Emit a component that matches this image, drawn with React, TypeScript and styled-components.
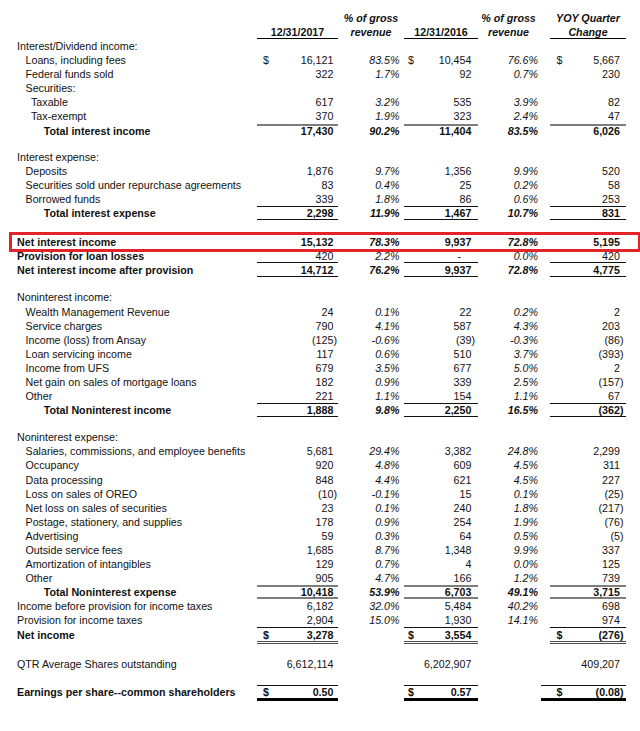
import React from 'react';
import styled, { createGlobalStyle } from 'styled-components';

const GlobalStyle = createGlobalStyle`
  html, body { margin: 0; padding: 0; background: #fff; }
  body {
    font-family: "Liberation Sans", Arial, Helvetica, sans-serif;
    color: #111;
  }
`;

const COLS = '257px 81px 66px 74px 72px 76px';

type Line = 'thin' | 'gray' | 'double' | 'thick' | undefined;

const GRAY = '#7d7d7d';
const DARKGRAY = '#4f4f4f';

const lineShadow = (top: Line, bottom: Line) => {
  const s: string[] = [];
  if (top === 'thin') s.push('inset 0 1px 0 #111');
  if (top === 'gray') s.push(`inset 0 2px 0 ${GRAY}`);
  if (bottom === 'thin') s.push('inset 0 -1px 0 #111');
  if (bottom === 'gray') s.push(`inset 0 -2px 0 ${GRAY}`);
  if (bottom === 'thick') s.push('inset 0 -3px 0 #000');
  if (bottom === 'double')
    s.push(`inset 0 -1px 0 ${DARKGRAY}`, 'inset 0 -2px 0 #fff', `inset 0 -3px 0 ${DARKGRAY}`);
  return s.length ? s.join(', ') : 'none';
};

/* rows closed by a heavy rule are a little taller so the rule sits below the figures */
const extraHeight = (l: Line) => (l === 'double' || l === 'thick' ? 2 : 0);

const Page = styled.div`
  width: 640px;
  padding: 11px 0 24px;
  font-size: 10.7px;
`;

const HeaderRow = styled.div`
  display: grid;
  grid-template-columns: ${COLS};
  height: 28px;
  align-items: end;
  line-height: 14px;
  font-weight: bold;
`;

const DateHead = styled.div`
  text-align: center;
  height: 14px;
  box-shadow: inset 0 -1px 0 #000;
`;

const PctHead = styled.div<{ $pr: number }>`
  text-align: center;
  font-style: italic;
  padding-right: ${(p) => p.$pr}px;
`;

const YoyHead = styled.div`
  text-align: center;
  font-style: italic;
  box-shadow: inset 0 -1px 0 #000;
`;

const Row = styled.div<{ $extra: number }>`
  position: relative;
  display: grid;
  grid-template-columns: ${COLS};
  height: ${(p) => 14.1 + p.$extra}px;
  line-height: 14.1px;
`;

const Gap = styled.div<{ $h: number }>`
  height: ${(p) => p.$h}px;
`;

const Label = styled.div<{ $indent: number; $bold?: boolean }>`
  padding-left: ${(p) => p.$indent}px;
  font-weight: ${(p) => (p.$bold ? 'bold' : 'normal')};
  white-space: nowrap;
`;

const Amount = styled.div<{
  $pl: number;
  $pr: number;
  $top?: Line;
  $bottom?: Line;
  $bold?: boolean;
  $extend?: number;
}>`
  display: flex;
  justify-content: space-between;
  align-items: flex-start;
  white-space: nowrap;
  margin-left: ${(p) => -(p.$extend || 0)}px;
  padding: 0 ${(p) => p.$pr}px 0 ${(p) => p.$pl + (p.$extend || 0)}px;
  box-shadow: ${(p) => lineShadow(p.$top, p.$bottom)};
  font-weight: ${(p) => (p.$bold ? 'bold' : 'normal')};
`;

const Cur = styled.span``;

const Num = styled.span<{ $neg?: boolean; $dash?: boolean }>`
  margin-left: auto;
  padding-right: ${(p) => (p.$neg ? '0' : p.$dash ? 'calc(0.333em + 10.5px)' : '0.333em')};
`;

const Pct = styled.div<{ $pr: number; $bold?: boolean }>`
  text-align: right;
  white-space: nowrap;
  font-style: italic;
  padding-right: ${(p) => p.$pr}px;
  font-weight: ${(p) => (p.$bold ? 'bold' : 'normal')};
`;

const Highlight = styled.div`
  position: absolute;
  left: 9px;
  right: -1px;
  top: -3px;
  bottom: -3px;
  border: 3px solid #e4222a;
  pointer-events: none;
  z-index: 1;
`;

type RowDef =
  | {
      kind: 'row';
      label: string;
      indent: number;
      lb?: boolean;
      vb?: boolean;
      v?: [string, string, string, string, string];
      cur?: boolean;
      top?: Line;
      bottom?: Line;
      highlight?: boolean;
      extend?: boolean;
    }
  | { kind: 'gap'; h: number };

const L0 = 17;
const L1 = 25.5;
const L2 = 31;
const LT = 43.7;

const r = (
  label: string,
  indent: number,
  v?: [string, string, string, string, string],
  extra: Partial<Extract<RowDef, { kind: 'row' }>> = {}
): RowDef => ({ kind: 'row', label, indent, v, ...extra });
const gap = (h: number): RowDef => ({ kind: 'gap', h });

const rows: RowDef[] = [
  r('Interest/Dividend income:', L0),
  r('Loans, including fees', L1, ['16,121', '83.5%', '10,454', '76.6%', '5,667'], { cur: true }),
  r('Federal funds sold', L1, ['322', '1.7%', '92', '0.7%', '230']),
  r('Securities:', L1),
  r('Taxable', L2, ['617', '3.2%', '535', '3.9%', '82']),
  r('Tax-exempt', L2, ['370', '1.9%', '323', '2.4%', '47']),
  r('Total interest income', LT, ['17,430', '90.2%', '11,404', '83.5%', '6,026'], {
    lb: true,
    vb: true,
    top: 'gray',
  }),
  gap(12),
  r('Interest expense:', L0),
  r('Deposits', L1, ['1,876', '9.7%', '1,356', '9.9%', '520']),
  r('Securities sold under repurchase agreements', L1, ['83', '0.4%', '25', '0.2%', '58']),
  r('Borrowed funds', L1, ['339', '1.8%', '86', '0.6%', '253']),
  r('Total interest expense', LT, ['2,298', '11.9%', '1,467', '10.7%', '831'], {
    lb: true,
    vb: true,
    top: 'thin',
    bottom: 'thin',
  }),
  gap(15),
  r('Net interest income', L0, ['15,132', '78.3%', '9,937', '72.8%', '5,195'], {
    lb: true,
    vb: true,
    highlight: true,
  }),
  r('Provision for loan losses', L0, ['420', '2.2%', '-', '0.0%', '420'], {
    lb: true,
    bottom: 'thin',
  }),
  r('Net interest income after provision', L0, ['14,712', '76.2%', '9,937', '72.8%', '4,775'], {
    lb: true,
    vb: true,
    bottom: 'thin',
  }),
  gap(13),
  r('Noninterest income:', L0),
  r('Wealth Management Revenue', L1, ['24', '0.1%', '22', '0.2%', '2']),
  r('Service charges', L1, ['790', '4.1%', '587', '4.3%', '203']),
  r('Income (loss) from Ansay', L1, ['(125)', '-0.6%', '(39)', '-0.3%', '(86)']),
  r('Loan servicing income', L1, ['117', '0.6%', '510', '3.7%', '(393)']),
  r('Income from UFS', L1, ['679', '3.5%', '677', '5.0%', '2']),
  r('Net gain on sales of mortgage loans', L1, ['182', '0.9%', '339', '2.5%', '(157)']),
  r('Other', L1, ['221', '1.1%', '154', '1.1%', '67']),
  r('Total Noninterest income', LT, ['1,888', '9.8%', '2,250', '16.5%', '(362)'], {
    lb: true,
    vb: true,
    top: 'thin',
    bottom: 'thin',
  }),
  gap(13),
  r('Noninterest expense:', L0),
  r('Salaries, commissions, and employee benefits', L1, ['5,681', '29.4%', '3,382', '24.8%', '2,299']),
  r('Occupancy', L1, ['920', '4.8%', '609', '4.5%', '311']),
  r('Data processing', L1, ['848', '4.4%', '621', '4.5%', '227']),
  r('Loss on sales of OREO', L1, ['(10)', '-0.1%', '15', '0.1%', '(25)']),
  r('Net loss on sales of securities', L1, ['23', '0.1%', '240', '1.8%', '(217)']),
  r('Postage, stationery, and supplies', L1, ['178', '0.9%', '254', '1.9%', '(76)']),
  r('Advertising', L1, ['59', '0.3%', '64', '0.5%', '(5)']),
  r('Outside service fees', L1, ['1,685', '8.7%', '1,348', '9.9%', '337']),
  r('Amortization of intangibles', L1, ['129', '0.7%', '4', '0.0%', '125']),
  r('Other', L1, ['905', '4.7%', '166', '1.2%', '739']),
  r('Total Noninterest expense', LT, ['10,418', '53.9%', '6,703', '49.1%', '3,715'], {
    lb: true,
    vb: true,
    top: 'gray',
    bottom: 'gray',
  }),
  r('Income before provision for income taxes', L0, ['6,182', '32.0%', '5,484', '40.2%', '698']),
  r('Provision for income taxes', L0, ['2,904', '15.0%', '1,930', '14.1%', '974'], {
    bottom: 'thin',
  }),
  r('Net income', L0, ['3,278', '', '3,554', '', '(276)'], {
    lb: true,
    vb: true,
    cur: true,
    bottom: 'double',
  }),
  gap(13),
  r('QTR Average Shares outstanding', L0, ['6,612,114', '', '6,202,907', '', '409,207']),
  gap(14),
  r('Earnings per share--common shareholders', L0, ['0.50', '', '0.57', '', '(0.08)'], {
    lb: true,
    vb: true,
    cur: true,
    top: 'thin',
    bottom: 'thick',
    extend: true,
  }),
];

const AMT = [
  { pl: 6, pr: 1 },
  { pl: 4, pr: 3 },
  { pl: 6.5, pr: 2.5 },
];
const PCT = [4.5, 12];

const isNeg = (v: string) => v.startsWith('(') && v.endsWith(')');

export default function App() {
  return (
    <>
      <GlobalStyle />
      <Page>
        <HeaderRow>
          <div />
          <DateHead>12/31/2017</DateHead>
          <PctHead $pr={0}>
            % of gross
            <br />
            revenue
          </PctHead>
          <DateHead>12/31/2016</DateHead>
          <PctHead $pr={11}>
            % of gross
            <br />
            revenue
          </PctHead>
          <YoyHead>
            YOY Quarter
            <br />
            Change
          </YoyHead>
        </HeaderRow>
        {rows.map((row, i) => {
          if (row.kind === 'gap') return <Gap key={i} $h={row.h} />;
          const v = row.v;
          const amount = (idx: 0 | 1 | 2, val: string, ext = 0) => (
            <Amount
              $pl={AMT[idx].pl}
              $pr={AMT[idx].pr}
              $top={row.top}
              $bottom={row.bottom}
              $bold={row.vb}
              $extend={ext}
            >
              {row.cur && <Cur>$</Cur>}
              <Num $neg={isNeg(val)} $dash={val === '-'}>
                {val}
              </Num>
            </Amount>
          );
          return (
            <Row key={i} $extra={extraHeight(row.bottom)}>
              <Label $indent={row.indent} $bold={row.lb}>
                {row.label}
              </Label>
              {v && (
                <>
                  {amount(0, v[0])}
                  <Pct $pr={PCT[0]} $bold={row.vb}>
                    {v[1]}
                  </Pct>
                  {amount(1, v[2])}
                  <Pct $pr={PCT[1]} $bold={row.vb}>
                    {v[3]}
                  </Pct>
                  {amount(2, v[4], row.extend ? 9 : 0)}
                </>
              )}
              {row.highlight && <Highlight />}
            </Row>
          );
        })}
      </Page>
    </>
  );
}
